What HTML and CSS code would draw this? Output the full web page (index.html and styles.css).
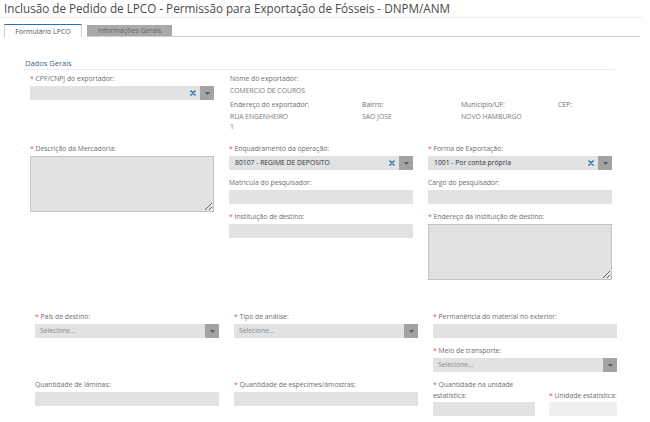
FILE: index.html
```html
<!DOCTYPE html>
<html lang="pt-BR">
<head>
<meta charset="utf-8">
<title>Inclusão de Pedido de LPCO</title>
<link rel="stylesheet" href="styles.css">
</head>
<body>
<h1 class="page-title">Inclusão de Pedido de LPCO - Permissão para Exportação de Fósseis - DNPM/ANM</h1>

<div class="tabs">
  <div class="tab tab-active">Formulário LPCO</div>
  <div class="tab tab-inactive">Informações Gerais</div>
  <div class="tab-rest"></div>
</div>

<div class="section">
  <div class="section-title">Dados Gerais</div>

  <div class="grid-top">
    <div class="field">
      <label class="lbl"><span class="req">*</span> CPF/CNPJ do exportador:</label>
      <div class="select">
        <span class="sel-text"></span>
        <svg class="clear" viewBox="0 0 6 6" width="6" height="6"><path d="M1 1L5 5M5 1L1 5" stroke="#2f6fb5" stroke-width="1.6" stroke-linecap="round"/></svg>
        <span class="sel-btn"><svg viewBox="0 0 5 3" width="5" height="3"><path d="M0 0H5L2.5 3Z" fill="#4c5d72"/></svg></span>
      </div>
    </div>

    <div class="info">
      <div class="info-full">
        <div class="info-lbl">Nome do exportador:</div>
        <div class="info-val">COMERCIO DE COUROS</div>
      </div>
      <div class="info-item">
        <div class="info-lbl">Endereço do exportador:</div>
        <div class="info-val">RUA ENGENHEIRO<br>1</div>
      </div>
      <div class="info-item">
        <div class="info-lbl">Bairro:</div>
        <div class="info-val">SAO JOSE</div>
      </div>
      <div class="info-item">
        <div class="info-lbl">Município/UF:</div>
        <div class="info-val">NOVO HAMBURGO</div>
      </div>
      <div class="info-item">
        <div class="info-lbl">CEP:</div>
        <div class="info-val"></div>
      </div>
    </div>
  </div>

  <div class="grid-mid">
    <div class="col">
      <div class="field">
        <label class="lbl"><span class="req">*</span> Descrição da Mercadoria:</label>
        <textarea class="area area-desc" readonly></textarea>
      </div>
    </div>
    <div class="col">
      <div class="field">
        <label class="lbl"><span class="req">*</span> Enquadramento da operação:</label>
        <div class="select">
          <span class="sel-text sel-value">80107 - REGIME DE DEPOSITO</span>
          <svg class="clear" viewBox="0 0 6 6" width="6" height="6"><path d="M1 1L5 5M5 1L1 5" stroke="#2f6fb5" stroke-width="1.6" stroke-linecap="round"/></svg>
          <span class="sel-btn"><svg viewBox="0 0 5 3" width="5" height="3"><path d="M0 0H5L2.5 3Z" fill="#4c5d72"/></svg></span>
        </div>
      </div>
      <div class="field">
        <label class="lbl">Matrícula do pesquisador:</label>
        <div class="input"></div>
      </div>
      <div class="field">
        <label class="lbl"><span class="req">*</span> Instituição de destino:</label>
        <div class="input"></div>
      </div>
    </div>
    <div class="col">
      <div class="field">
        <label class="lbl"><span class="req">*</span> Forma de Exportação:</label>
        <div class="select">
          <span class="sel-text sel-value">1001 - Por conta própria</span>
          <svg class="clear" viewBox="0 0 6 6" width="6" height="6"><path d="M1 1L5 5M5 1L1 5" stroke="#2f6fb5" stroke-width="1.6" stroke-linecap="round"/></svg>
          <span class="sel-btn"><svg viewBox="0 0 5 3" width="5" height="3"><path d="M0 0H5L2.5 3Z" fill="#4c5d72"/></svg></span>
        </div>
      </div>
      <div class="field">
        <label class="lbl">Cargo do pesquisador:</label>
        <div class="input"></div>
      </div>
      <div class="field">
        <label class="lbl"><span class="req">*</span> Endereço da instituição de destino:</label>
        <textarea class="area area-end" readonly></textarea>
      </div>
    </div>
  </div>

  <div class="grid-bottom">
    <div class="field">
      <label class="lbl"><span class="req">*</span> País de destino:</label>
      <div class="select">
        <span class="sel-text sel-ph">Selecione...</span>
        <span class="sel-btn"><svg viewBox="0 0 5 3" width="5" height="3"><path d="M0 0H5L2.5 3Z" fill="#4c5d72"/></svg></span>
      </div>
    </div>
    <div class="field">
      <label class="lbl"><span class="req">*</span> Tipo de análise:</label>
      <div class="select">
        <span class="sel-text sel-ph">Selecione...</span>
        <span class="sel-btn"><svg viewBox="0 0 5 3" width="5" height="3"><path d="M0 0H5L2.5 3Z" fill="#4c5d72"/></svg></span>
      </div>
    </div>
    <div class="field">
      <label class="lbl"><span class="req">*</span> Permanência do material no exterior:</label>
      <div class="input"></div>
    </div>

    <div class="cell-empty"></div>
    <div class="cell-empty"></div>
    <div class="field">
      <label class="lbl"><span class="req">*</span> Meio de transporte:</label>
      <div class="select">
        <span class="sel-text sel-ph">Selecione...</span>
        <span class="sel-btn"><svg viewBox="0 0 5 3" width="5" height="3"><path d="M0 0H5L2.5 3Z" fill="#4c5d72"/></svg></span>
      </div>
    </div>

    <div class="field">
      <label class="lbl">Quantidade de lâminas:</label>
      <div class="input"></div>
    </div>
    <div class="field">
      <label class="lbl"><span class="req">*</span> Quantidade de espécimes/amostras:</label>
      <div class="input"></div>
    </div>
    <div class="split">
      <div class="field">
        <label class="lbl lbl-wrap"><span class="req">*</span> Quantidade na unidade<br>estatística:</label>
        <div class="input"></div>
      </div>
      <div class="field">
        <label class="lbl"><span class="req">*</span> Unidade estatística:</label>
        <div class="input input-light"></div>
      </div>
    </div>
  </div>
</div>
</body>
</html>
```

FILE: styles.css
```css
* { box-sizing: border-box; }

body {
  margin: 0;
  background: #ffffff;
  font-family: "Open Sans", "Noto Sans", Arial, sans-serif;
  color: #6e6e6e;
  width: 650px;
}

.page-title {
  margin: 0;
  padding: 0 0 0 4px;
  font-size: 11.7px;
  font-weight: 400;
  line-height: 17px;
  height: 18px;
  color: #4a4a4a;
  border-bottom: 1px solid #ececec;
  width: 642px;
}

.tabs {
  display: flex;
  align-items: flex-end;
  margin-top: 6px;
  height: 13px;
  width: 640px;
}

.tab {
  font-size: 7px;
  line-height: 11px;
  height: 12px;
  text-align: center;
}

.tab-active {
  width: 78px;
  margin-left: 4px;
  height: 13px;
  background: #ffffff;
  color: #555555;
  border-top: 1px solid #3c6e9c;
  border-left: 1px solid #cfcfcf;
  border-right: 1px solid #cfcfcf;
  padding-top: 1px;
}

.tab-inactive {
  width: 85px;
  margin-left: 5px;
  background: #a9a9a9;
  color: #666666;
  margin-bottom: 1px;
  height: 11px;
  line-height: 11px;
  box-shadow: 0 1px 0 #cfcfcf;
}

.tab-rest {
  flex: 1;
  height: 1px;
  background: #cfcfcf;
}

.section {
  padding-top: 20px;
}

.section-title {
  margin-left: 24px;
  width: 591px;
  padding-left: 1px;
  font-size: 7.5px;
  line-height: 12px;
  color: #3d6187;
  border-bottom: 1px solid #ebebeb;
}

.lbl {
  display: block;
  font-size: 6.8px;
  line-height: 12px;
  color: #6e6e6e;
  margin-bottom: 1px;
  white-space: nowrap;
}

.req { color: #e0584f; }

.field { margin-bottom: 7px; }

.select {
  display: flex;
  align-items: center;
  height: 14px;
  background: #e1e2e4;
}

.sel-text {
  flex: 1;
  padding-left: 6px;
  font-size: 6.8px;
  line-height: 14px;
  white-space: nowrap;
  overflow: hidden;
}

.sel-value { color: #333333; }
.sel-ph { color: #8a8a8a; padding-left: 5px; }

.clear { margin-right: 4px; display: block; }

.sel-btn {
  width: 14px;
  height: 14px;
  background: #a3a3a3;
  display: flex;
  align-items: center;
  justify-content: center;
}
.sel-btn svg { display: block; }

.input {
  height: 14px;
  background: #e1e2e4;
}

.input-light { background: #eeefef; }

.area {
  display: block;
  width: 184px;
  margin: 0;
  padding: 0;
  background: #e1e2e4;
  border: 1px solid #c3c3c3;
  resize: both;
  outline: none;
  font-family: inherit;
}

.area-desc { height: 56px; }
.area-end { height: 56px; }

.grid-top {
  display: grid;
  grid-template-columns: 184px 383px;
  column-gap: 15px;
  margin-left: 30px;
  margin-top: 3px;
}

.info {
  display: grid;
  grid-template-columns: 132px 99px 97px 55px;
}

.info-full { grid-column: 1 / -1; margin-bottom: 3px; }

.info-lbl {
  font-size: 6.8px;
  line-height: 12px;
  color: #6e6e6e;
  padding-left: 1px;
  white-space: nowrap;
}

.info-val {
  font-size: 6.8px;
  line-height: 11px;
  color: #7a7a7a;
  padding-left: 1px;
  white-space: nowrap;
}

.info-item .info-val { line-height: 10px; margin-top: 1px; }

.grid-mid {
  display: grid;
  grid-template-columns: repeat(3, 184px);
  column-gap: 15px;
  margin-left: 30px;
  margin-top: 11px;
}

.grid-bottom {
  display: grid;
  grid-template-columns: 184px 184px 184px;
  column-gap: 15px;
  margin-left: 35px;
  margin-top: 24px;
}

.split {
  display: grid;
  grid-template-columns: 102px 68px;
  column-gap: 14px;
  align-items: end;
}

.split .lbl { line-height: 11px; margin-bottom: 1px; }
.split .field { margin-bottom: 0; }
```
